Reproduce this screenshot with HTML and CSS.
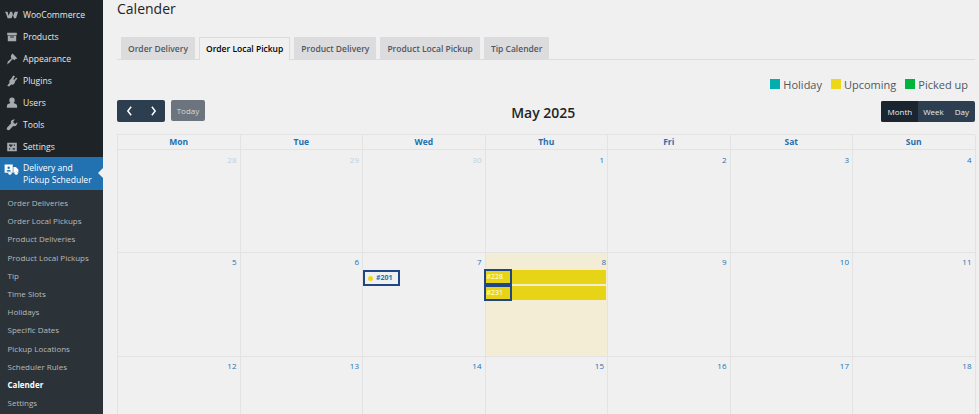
FILE: index.html
```html
<!DOCTYPE html>
<html lang="en">
<head>
<meta charset="utf-8">
<title>Calender</title>
<link rel="stylesheet" href="styles.css">
</head>
<body>
<div class="app">
  <aside class="side">
    <ul class="menu">
      <li><svg class="mi mi-woo" viewBox="0 0 20 12"><path d="M0 1h4l1.500 6L8 1h3l1.500 6L15 1h5l-3 10h-3l-2-5-2 5H7L4 11 2 5z" fill="#a7aaad"/></svg>WooCommerce</li>
      <li><svg class="mi" viewBox="0 0 20 20"><path d="M2 3h16v4H2zM3 8h14v9H3zM7 9v2h6V9z" fill="#a7aaad" fill-rule="evenodd"/></svg>Products</li>
      <li><svg class="mi" viewBox="0 0 20 20"><path d="M11 1l8 8-3 1-2 2-3-2-5 6-4 3 1-5 6-5-1-3 1-3z" fill="#a7aaad"/></svg>Appearance</li>
      <li><svg class="mi" viewBox="0 0 20 20"><path d="M12 1l3 1-3 5 2 1 3-4 2 2-4 5c0 4-3 6-6 5l-4 3-3-1 4-5c-1-3 0-5 2-6z" fill="#a7aaad"/></svg>Plugins</li>
      <li><svg class="mi" viewBox="0 0 20 20"><path d="M10 1a4.500 4.500 0 0 1 4.500 4.500A4.500 4.500 0 0 1 12.500 10c3 1 6 2 6 5v3h-17v-3c0-3 3-4 6-5a4.500 4.500 0 0 1-2-4.500A4.500 4.500 0 0 1 10 1z" fill="#a7aaad"/></svg>Users</li>
      <li><svg class="mi" viewBox="0 0 20 20"><path d="M19 5l-3 3-3-1-1-3 3-3c-3-1-7 1-7 4l.5 2L2 14c-1 1-1 3 0 4s3 1 4 0l6-6.500 2 .5c3 0 5-3 5-7z" fill="#a7aaad"/></svg>Tools</li>
      <li><svg class="mi" viewBox="0 0 20 20"><path d="M2 3h16v14H2zM5 6v2h2v2h2V8h2V6zM13 6v2h2V6zM5 12v2h2v-2zM11 12v2h4v-2z" fill="#a7aaad" fill-rule="evenodd"/></svg>Settings</li>
      <li class="cur"><svg class="mi mi-truck" viewBox="0 0 24 20"><path d="M1 2h13v13h-2a3 3 0 0 0-5 0H1zM15 6h4l4 4v5h-1a3 3 0 0 0-5 0h-2z" fill="#fff"/><circle cx="9.500" cy="16" r="2.500" fill="#fff"/><circle cx="19.500" cy="16" r="2.500" fill="#fff"/><circle cx="7.500" cy="7" r="2" fill="#2271b1"/><path d="M4 13c0-3 7-3 7 0z" fill="#2271b1"/></svg><span>Delivery and<br>Pickup Scheduler</span></li>
    </ul>
    <ul class="sub">
      <li>Order Deliveries</li>
      <li>Order Local Pickups</li>
      <li>Product Deliveries</li>
      <li>Product Local Pickups</li>
      <li>Tip</li>
      <li>Time Slots</li>
      <li>Holidays</li>
      <li>Specific Dates</li>
      <li>Pickup Locations</li>
      <li>Scheduler Rules</li>
      <li class="on">Calender</li>
      <li>Settings</li>
    </ul>
  </aside>
  <main class="main">
    <h1 class="title">Calender</h1>
    <nav class="tabs">
      <a class="tab">Order Delivery</a>
      <a class="tab active">Order Local Pickup</a>
      <a class="tab">Product Delivery</a>
      <a class="tab">Product Local Pickup</a>
      <a class="tab">Tip Calender</a>
    </nav>
    <div class="legend">
      <span class="key"><i class="sw teal"></i>Holiday</span>
      <span class="key"><i class="sw yellow"></i>Upcoming</span>
      <span class="key"><i class="sw green"></i>Picked up</span>
    </div>
    <div class="toolbar">
      <div class="tb-left">
        <div class="pager">
          <button class="arrow"><svg viewBox="0 0 8 12"><path d="M6 1L2 6l4 5" fill="none" stroke="#fff" stroke-width="1.800"/></svg></button>
          <button class="arrow"><svg viewBox="0 0 8 12"><path d="M2 1l4 5-4 5" fill="none" stroke="#fff" stroke-width="1.800"/></svg></button>
        </div>
        <button class="today">Today</button>
      </div>
      <h2 class="month">May 2025</h2>
      <div class="views">
        <button class="view sel">Month</button>
        <button class="view wk">Week</button>
        <button class="view">Day</button>
      </div>
    </div>
    <div class="cal">
      <div class="dow">Mon</div><div class="dow">Tue</div><div class="dow">Wed</div><div class="dow">Thu</div><div class="dow">Fri</div><div class="dow">Sat</div><div class="dow">Sun</div>

      <div class="day r1 muted">28</div><div class="day r1 muted">29</div><div class="day r1 muted">30</div><div class="day r1">1</div><div class="day r1">2</div><div class="day r1">3</div><div class="day r1">4</div>

      <div class="day r2">5</div><div class="day r2">6</div>
      <div class="day r2 has-dot">7
        <div class="ev-dot"><i class="dot"></i>#201</div>
      </div>
      <div class="day r2 now">8
        <div class="ev-bar"><span class="ev-id">#228</span></div>
        <div class="ev-bar"><span class="ev-id">#231</span></div>
      </div>
      <div class="day r2">9</div><div class="day r2">10</div><div class="day r2">11</div>

      <div class="day">12</div><div class="day">13</div><div class="day">14</div><div class="day">15</div><div class="day">16</div><div class="day">17</div><div class="day">18</div>
    </div>
  </main>
</div>
</body>
</html>
```
FILE: styles.css
```css
* { box-sizing: border-box; }
html, body { margin: 0; height: 100%; overflow: hidden; }
body { background: #f0f0f1; font-family: "Open Sans", "Noto Sans", sans-serif; color: #3c434a; }
.app { display: flex; height: 414px; overflow: hidden; }
ul { list-style: none; margin: 0; padding: 0; }

.side { width: 103px; flex: none; background: #1d2327; color: #f0f0f1; display: flex; flex-direction: column; }
.menu { padding-top: 3px; }
.menu li { height: 22px; display: flex; align-items: center; font-size: 8.600px; color: #e6e8ea; padding: 1px 0 0 6px; gap: 5px; white-space: nowrap; }
.mi { width: 12px; height: 12px; flex: none; }
.mi-woo { width: 13px; margin-left: -1px; }
.menu li.cur { position: relative; height: 33px; margin-top: 0; padding: 0 0 0 4px; background: #2271b1; color: #fff; line-height: 12px; gap: 4px; }
.mi-truck { width: 15px; height: 13px; margin-bottom: 9px; }
.menu li.cur::after { content: ""; position: absolute; right: 0; top: 11px; border: 5.500px solid transparent; border-left: 0; border-right-color: #f0f0f1; }
.sub { flex: 1; background: #2c3338; padding-top: 4px; }
.sub li { height: 18.200px; line-height: 18.200px; font-size: 8px; padding-left: 7.500px; color: #b6babd; white-space: nowrap; }
.sub li.on { color: #fff; font-weight: 700; }

.main { flex: 1; min-width: 0; padding-left: 14px; padding-right: 4px; }
.title { margin: 0; padding-top: 1px; font-size: 14px; line-height: 16px; font-weight: 400; color: #1d2327; }
.tabs { display: flex; gap: 4px; margin-top: 20px; padding-left: 4px; height: 23px; border-bottom: 1px solid #dcdcde; }
.tab { height: 22px; line-height: 22px; padding: 0 6px; font-size: 8.500px; font-weight: 600; color: #50575e; background: #dcdcde; border: 1px solid #dcdcde; border-bottom: 0; white-space: nowrap; }
.tab.active { height: 23px; background: #f0f0f1; color: #000; border-color: #dcdcde; }

.legend { display: flex; justify-content: flex-end; gap: 9px; margin-top: 17px; padding-right: 7px; font-size: 11px; line-height: 16px; color: #50575e; }
.key { display: flex; align-items: center; gap: 3px; }
.sw { width: 10px; height: 10px; margin-bottom: 2px; }
.teal { background: #00aeae; }
.yellow { background: #ecd818; }
.green { background: #00b33c; }

.toolbar { display: flex; justify-content: space-between; align-items: center; margin-top: 7px; height: 22px; }
.tb-left { display: flex; gap: 6px; }
button { font-family: inherit; border: 0; cursor: pointer; padding: 0; }
.pager { display: flex; width: 48px; height: 22px; background: #2c3e50; border-radius: 2px; }
.arrow { flex: 1; background: transparent; display: flex; align-items: center; justify-content: center; }
.arrow svg { width: 7px; height: 10px; }
.today { width: 34px; height: 21px; background: #6c757d; color: #d5d8da; font-size: 8px; border-radius: 2px; }
.month { margin: 4px 0 0; font-size: 14px; line-height: 22px; font-weight: 600; color: #212529; white-space: nowrap; }
.views { display: flex; height: 21px; background: #2c3e50; border-radius: 2px; overflow: hidden; }
.view { background: transparent; color: #e9ecef; font-size: 8px; padding: 0 6px; }
.view.wk { padding: 0 5px; }
.view.sel { background: #1a252f; }

.cal { display: grid; grid-template-columns: repeat(7, 122.500px); width: 858px; margin-top: 12px; border-top: 1px solid #e3e3e3; border-left: 1px solid #e3e3e3; }
.dow { height: 15px; line-height: 14px; text-align: center; font-size: 8.500px; font-weight: 700; color: #2271b1; border-right: 1px solid #e3e3e3; border-bottom: 1px solid #e3e3e3; }
.day { height: 104px; padding: 2px 3px 0 0; text-align: right; font-size: 8px; line-height: 14px; color: #2271b1; border-right: 1px solid #e3e3e3; border-bottom: 1px solid #e3e3e3; }
.day.r1 { height: 103px; padding-top: 3px; }
.muted { color: #b9d0e2; }
.now { background: #f3edd6; padding-right: 1px; }

.ev-dot { display: flex; align-items: center; gap: 3px; width: 37px; height: 16px; margin-top: 1px; padding-left: 3px; background: #f0f0f1; border: 2px solid #1f4788; font-size: 7px; font-weight: 700; color: #2271b1; text-align: left; }
.dot { width: 5px; height: 5px; border-radius: 50%; background: #ecd818; }
.ev-bar { height: 14px; margin-top: 1px; margin-bottom: 2px; background: #e8d417; display: flex; align-items: center; }
.ev-bar + .ev-bar { margin-top: 2px; }
.ev-id { flex: none; width: 28px; height: 16px; margin-left: -2px; border: 2px solid #1f4788; background: #e8d417; color: #fff; font-size: 7px; line-height: 12px; text-align: left; padding-left: 1px; }
```
